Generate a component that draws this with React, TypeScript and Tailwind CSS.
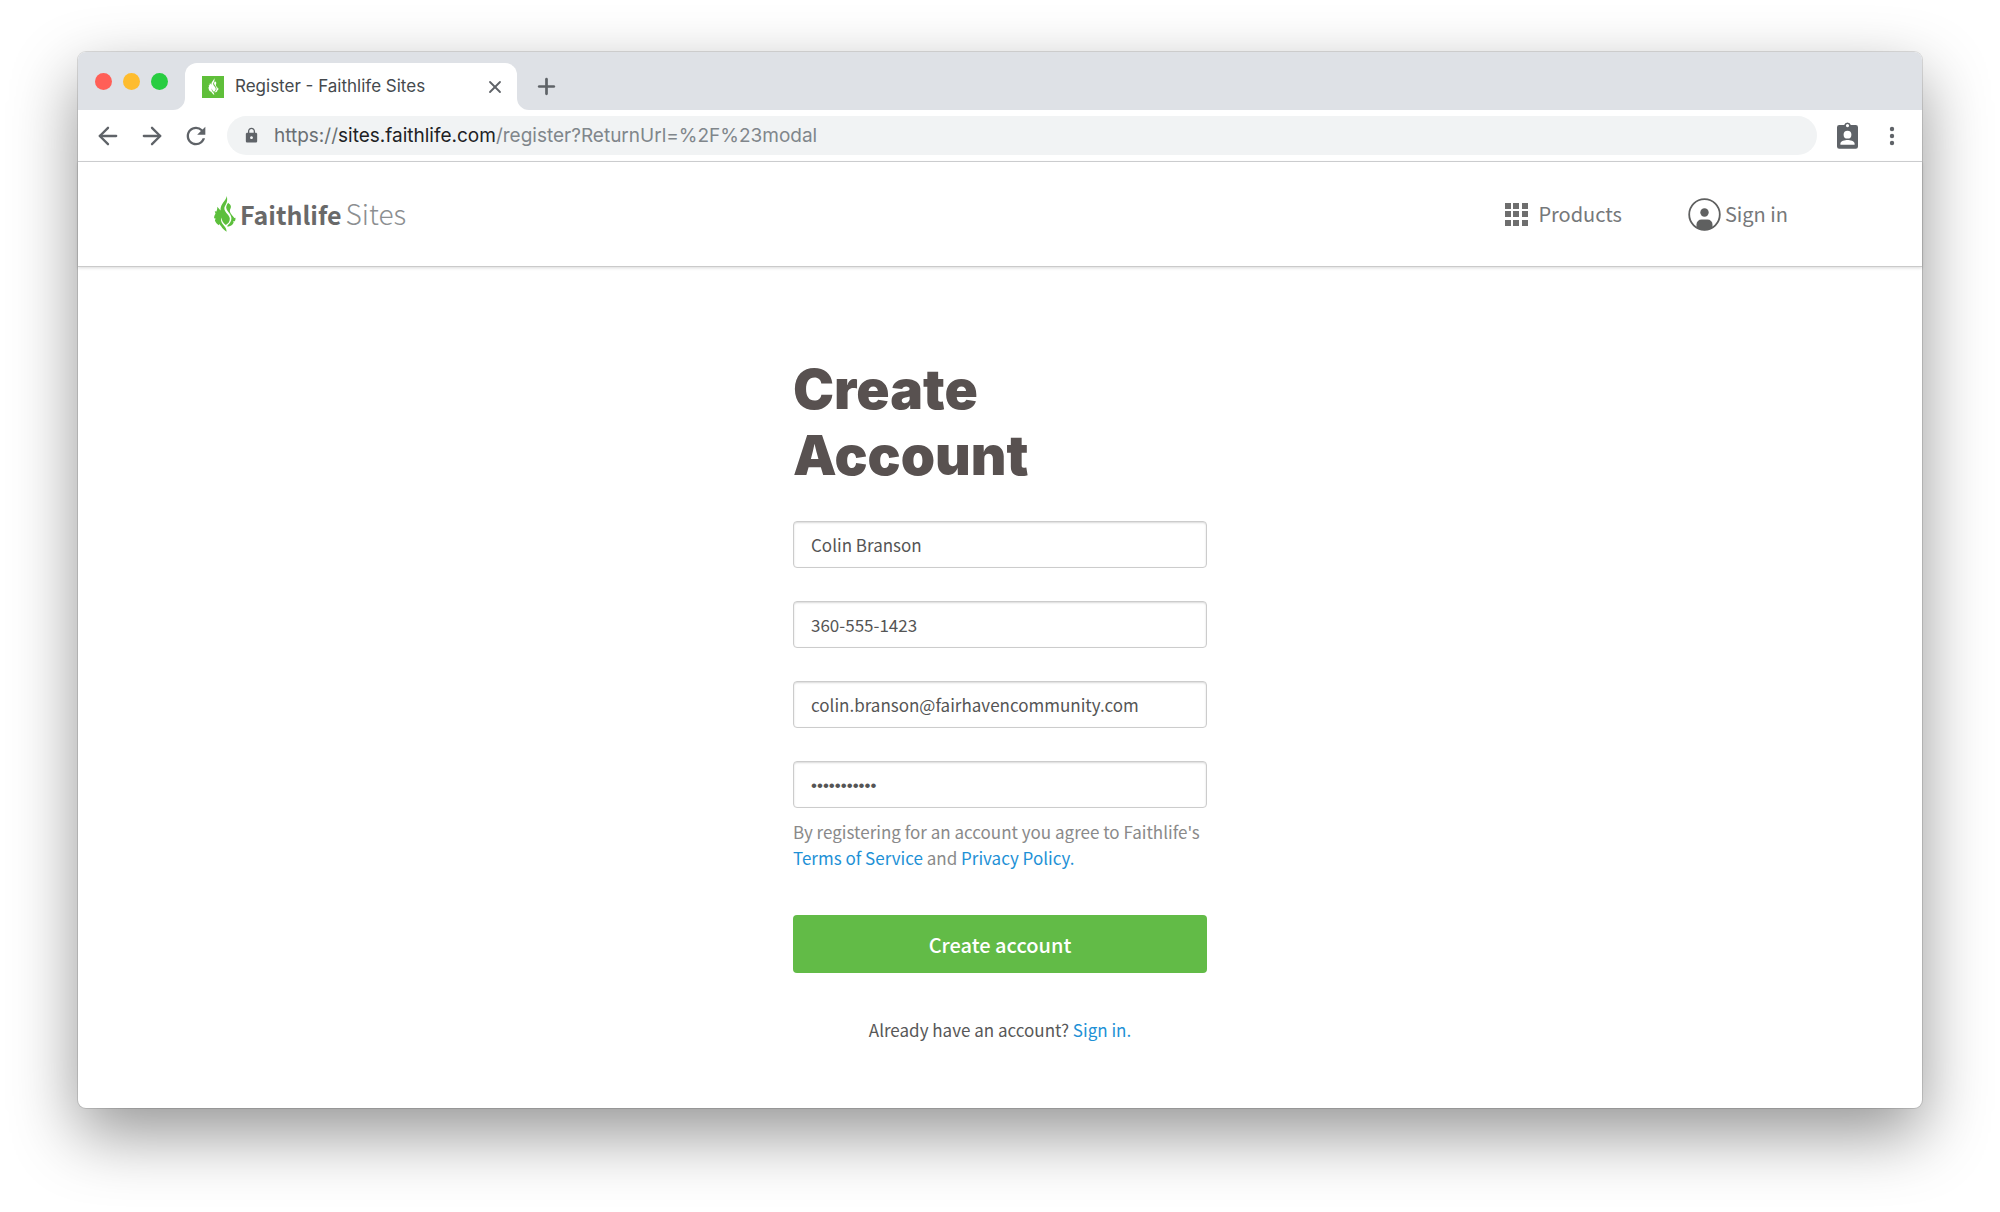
import { useState } from 'react';
import type { ReactNode } from 'react';
import { ArrowLeft, ArrowRight, Plus, X } from 'lucide-react';
import { MdLock, MdRefresh } from 'react-icons/md';

const chromeFont = "font-[Inter,'Liberation_Sans',sans-serif]";
const siteFont = "font-['Noto_Sans_CJK_JP','Noto_Sans',sans-serif]";

function Flame({ className }: { className: string }) {
  return (
    <svg viewBox="0 0 22 36" className={className} fill="currentColor" aria-hidden="true">
      {/* left leaf with the jagged edge */}
      <path d="M12.700 0C12.400 5 6.300 7 6.500 14.500L3.300 10.800C3.400 12.800 3 14.200 2.400 15.400L.8 15.200 1.500 17.800C.6 19 .1 20.500.1 22.300L1.600 22.600.9 24.600C1.700 26.800 3 28.300 4.800 29.200L5.200 28 7.300 30.500C8.400 32.800 10.400 34 12.600 35.800 12.600 33.800 12 32 10.600 30.400 8 27.600 6.300 25.500 7.400 21.600 7.800 24.600 9.200 27.200 11.800 29 14.200 27.800 16 25.600 15.800 22.600 15.600 19 11.200 17.200 10.400 13.300 9.900 10.500 12.200 8.600 12.700 6.500 13.400 4.300 13.300 2 12.700 0Z" />
      {/* right tongue */}
      <path d="M14.200 6.800C12.600 9 11.600 10.900 12.600 13.200 13.800 16 17.200 18.200 17.400 22.100 17.500 25.200 16 27.500 13.600 29.300L13.400 30.800C16.200 30.600 18.800 29 19.700 26.600L18.900 25.500 20.700 25.300C21.400 24.300 21.700 23 21.400 21.800L20.300 22.100C19.300 19.700 16 17.800 15.900 14.900 15.900 12.900 17.700 11.500 16.500 9.200 16 8.200 15 7.800 14.200 6.800Z" />
    </svg>
  );
}

function TabFoot({ flip = false }: { flip?: boolean }) {
  return (
    <svg viewBox="0 0 12 12" className={`size-3 shrink-0 ${flip ? '-scale-x-100' : ''}`} fill="#fff" aria-hidden="true">
      <path d="M12 0v12H0A12 12 0 0 0 12 0Z" />
    </svg>
  );
}

function BadgeIcon() {
  return (
    <svg viewBox="0 0 21 27" className="h-[27px] w-[21px]" fill="#5f6368" aria-hidden="true">
      <path
        fillRule="evenodd"
        d="M7.200 3a3.400 3.400 0 0 1 6.600 0H18.800A2.200 2.200 0 0 1 21 5.200V24.500A2.200 2.200 0 0 1 18.800 26.700H2.200A2.200 2.200 0 0 1 0 24.500V5.200A2.200 2.200 0 0 1 2.200 3ZM10.500 2a1.600 1.600 0 1 0 0 3.200 1.600 1.600 0 0 0 0-3.200ZM10.500 8.800a3.900 3.900 0 1 0 0 7.800 3.900 3.900 0 0 0 0-7.800ZM3.400 22.700H17.600V21.400C17.600 19 13 17.900 10.500 17.900S3.400 19 3.400 21.400Z"
      />
    </svg>
  );
}

function MoreIcon() {
  return (
    <svg viewBox="0 0 6 20" className="h-5 w-[6px]" fill="#5f6368" aria-hidden="true">
      <circle cx="3" cy="3" r="2.200" />
      <circle cx="3" cy="10" r="2.200" />
      <circle cx="3" cy="17" r="2.200" />
    </svg>
  );
}

function GridIcon() {
  const cells = [0, 8, 17];
  return (
    <svg viewBox="0 0 23 23" className="size-[23px]" fill="#6e6e6e" aria-hidden="true">
      {cells.map(y => cells.map(x => <rect key={`${x}-${y}`} x={x} y={y} width="6" height="6" />))}
    </svg>
  );
}

function UserIcon() {
  return (
    <svg viewBox="0 0 33 33" className="size-[33px]" aria-hidden="true">
      <circle cx="16.500" cy="16.500" r="15.300" fill="none" stroke="#5f6060" strokeWidth="1.800" />
      <circle cx="16.500" cy="14.500" r="4.200" fill="#5f6060" />
      <path d="M8.500 30v-3.500a5 5 0 0 1 5-5h6a5 5 0 0 1 5 5V30a16 16 0 0 1-16 0Z" fill="#5f6060" />
    </svg>
  );
}

function IconButton({ label, children }: { label: string; children: ReactNode }) {
  return (
    <button type="button" aria-label={label} className="flex items-center justify-center text-[#5f6368]">
      {children}
    </button>
  );
}

function TabStrip() {
  return (
    <div className="flex h-[58px] items-end rounded-t-lg bg-[#dee1e6]">
      <div className="mb-5 flex gap-[11px] pl-[17px]">
        <span className="size-[17px] rounded-full bg-[#ff5f57]" />
        <span className="size-[17px] rounded-full bg-[#febc2e]" />
        <span className="size-[17px] rounded-full bg-[#28cd41]" />
      </div>
      <div className="ml-[5px] flex items-end">
        <TabFoot />
        <div className="flex h-[47px] w-[332px] items-center rounded-t-xl bg-white pr-3 pl-[17px]">
          <span className="flex size-[22px] items-center justify-center bg-[#5fbf3a] text-white">
            <Flame className="h-[17px] w-[11px]" />
          </span>
          <span className="ml-[11px] flex-1 text-[17px] text-[#45494d]">Register - Faithlife Sites</span>
          <IconButton label="Close tab">
            <X size={20} strokeWidth={2.2} />
          </IconButton>
        </div>
        <TabFoot flip />
      </div>
      <div className="mb-[11px] ml-[5px]">
        <IconButton label="New tab">
          <Plus size={25} strokeWidth={2.6} />
        </IconButton>
      </div>
    </div>
  );
}

function Toolbar() {
  return (
    <div className="flex h-[52px] items-center border-b border-[#d0d1d3] bg-white pr-[27px] pl-4">
      <div className="flex gap-4">
        <IconButton label="Back">
          <ArrowLeft size={28} />
        </IconButton>
        <IconButton label="Forward">
          <ArrowRight size={28} />
        </IconButton>
        <IconButton label="Reload">
          <MdRefresh size={28} />
        </IconButton>
      </div>
      <div className="ml-[17px] flex h-[39px] flex-1 items-center rounded-full bg-[#f1f3f4] pl-4">
        <MdLock size={17} color="#5f6368" />
        <div className="ml-3.5 pt-0.5 text-[19px] text-[#80868b]">
          <span className="text-[#6a6f73]">https://</span>
          <span className="text-[#202124]">sites.faithlife.com</span>
          /register?ReturnUrl=%2F%23modal
        </div>
      </div>
      <div className="ml-5 flex items-center gap-[31px]">
        <IconButton label="Profile">
          <BadgeIcon />
        </IconButton>
        <IconButton label="Menu">
          <MoreIcon />
        </IconButton>
      </div>
    </div>
  );
}

function SiteHeader() {
  return (
    <header className="flex h-[105px] items-center justify-between border-b border-[#cacaca] pr-[134px] pl-[136px] shadow-[0_1px_3px_rgba(0,0,0,0.15)]">
      <a href="#home" className="flex items-center">
        <Flame className="h-9 w-[22px] text-[#5cbf3c]" />
        <span className="flex items-baseline gap-1 pb-0.5 pl-1 leading-9">
          <span className="text-[25px] font-bold text-[#696969]">Faithlife</span>
          <span className="text-[28px] font-light text-[#8c8f91]">Sites</span>
        </span>
      </a>
      <nav className="flex items-center gap-[66px] text-xl text-[#76787a]">
        <a href="#products" className="flex items-center gap-2.5">
          <GridIcon />
          Products
        </a>
        <a href="#signin" className="flex items-center gap-1">
          <UserIcon />
          Sign in
        </a>
      </nav>
    </header>
  );
}

const fields = [
  { name: 'name', label: 'Full name', type: 'text', value: 'Colin Branson' },
  { name: 'phone', label: 'Phone', type: 'tel', value: '360-555-1423' },
  { name: 'email', label: 'Email', type: 'email', value: 'colin.branson@fairhavencommunity.com' },
  { name: 'password', label: 'Password', type: 'password', value: 'fairhaven19' },
];

function RegisterForm() {
  const [values, setValues] = useState<Record<string, string>>(
    Object.fromEntries(fields.map(f => [f.name, f.value])),
  );

  return (
    <form className="w-[414px]" onSubmit={e => e.preventDefault()}>
      <h1 className="mb-[33px] w-64 font-[Inter,'Noto_Sans_CJK_JP',sans-serif] text-[55px] leading-[66px] font-black text-[#585150]">
        Create Account
      </h1>
      <div className="flex flex-col gap-[33px]">
        {fields.map(f => (
          <input
            key={f.name}
            aria-label={f.label}
            name={f.name}
            type={f.type}
            value={values[f.name]}
            onChange={e => setValues({ ...values, [f.name]: e.target.value })}
            className={`block h-[47px] w-full rounded border border-[#ccc] bg-white px-[17px] text-[17px] text-[#555] shadow-[inset_0_1px_2px_rgba(0,0,0,0.15)] outline-none ${
              f.type === 'password' ? "pt-0.5 font-['Liberation_Sans',sans-serif]" : ''
            }`}
          />
        ))}
      </div>
      <p className="mt-[11px] text-[17px] leading-[26px] text-[#8a8a8a]">
        By registering for an account you agree to Faithlife's{' '}
        <a href="#terms" className="text-[#1e91d6]">Terms of Service</a> and{' '}
        <a href="#privacy" className="text-[#1e91d6]">Privacy Policy.</a>
      </p>
      <button type="submit" className="mt-11 h-[58px] w-full rounded bg-[#62bb47] pt-0.5 text-xl font-medium text-white">
        Create account
      </button>
      <p className="mt-11 text-center text-[17px] leading-[26px] text-[#585858]">
        Already have an account? <a href="#signin" className="text-[#1e91d6]">Sign in.</a>
      </p>
    </form>
  );
}

export default function App() {
  return (
    <div className="min-h-screen bg-white px-[78px] pt-[52px] pb-[102px]">
      <div className="rounded-lg bg-white shadow-[0_26px_66px_rgba(0,0,0,0.42),0_0_0_1px_rgba(0,0,0,0.12)]">
        <div className={chromeFont}>
          <TabStrip />
          <Toolbar />
        </div>
        <div className={siteFont}>
          <SiteHeader />
          <main className="flex justify-center pt-[89px] pb-[65px]">
            <RegisterForm />
          </main>
        </div>
      </div>
    </div>
  );
}
